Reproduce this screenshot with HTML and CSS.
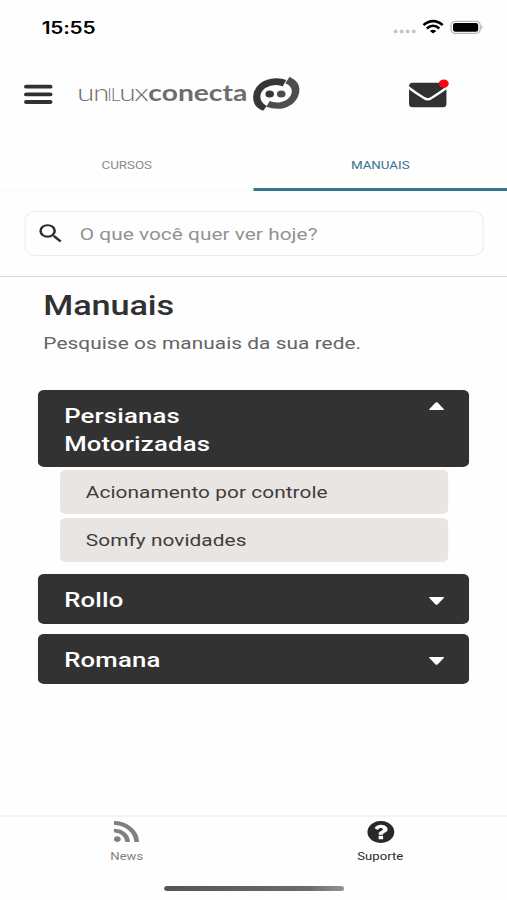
FILE: index.html
```html
<!DOCTYPE html>
<html lang="pt-BR">
<head>
<meta charset="utf-8">
<title>Unilux Conecta</title>
<link rel="stylesheet" href="styles.css">
</head>
<body>
<div class="app">
  <div class="status">
    <span class="time">15:55</span>
    <svg class="status-icons" width="74" height="16" viewBox="0 0 90 16" preserveAspectRatio="none">
      <g fill="#c4c4c4"><circle cx="2.500" cy="12.400" r="1.900"/><circle cx="8.500" cy="12.400" r="1.900"/><circle cx="14.500" cy="12.400" r="1.900"/><circle cx="20.500" cy="12.400" r="1.900"/></g>
      <g fill="none" stroke="#000" stroke-width="2.600"><path d="M30.200 6.200C35.700.7 43.700.7 49.200 6.200"/><path d="M33.500 9.500C37.300 6 42.100 6 45.900 9.500"/></g>
      <path d="M36.500 12Q39.700 9.500 42.900 12L39.700 14.500Z"/>
      <rect x="57.500" y="2.300" width="29" height="12" rx="4" fill="#fff" stroke="#b5b5b5" stroke-width="1.300"/>
      <rect x="59.500" y="3.900" width="25" height="8.800" rx="2.200"/>
      <path d="M87.800 6.300q2 2 0 4z" fill="#999"/>
    </svg>
  </div>
  <header class="header">
    <svg class="menu" width="23" height="20" viewBox="0 0 23 20"><path d="M1.500 2.700h19.500M1.500 10.400h19.500M1.500 18h19.500" stroke="#303132" stroke-width="3.800" stroke-linecap="round"/></svg>
    <svg class="logo" width="182" height="38" viewBox="0 0 223 38" preserveAspectRatio="none">
      <text class="logo-thin" x="-1.500" y="26" textLength="17.500" lengthAdjust="spacingAndGlyphs">u</text>
      <text class="logo-thin" x="15" y="26" textLength="16" lengthAdjust="spacingAndGlyphs">n</text>
      <text class="logo-caps" x="28.800" y="26">I</text>
      <text class="logo-caps" x="32.500" y="26" textLength="9.500" lengthAdjust="spacingAndGlyphs">L</text>
      <text class="logo-thin" x="41" y="26" textLength="16.500" lengthAdjust="spacingAndGlyphs">u</text>
      <text class="logo-thin" x="56" y="26" textLength="14.500" lengthAdjust="spacingAndGlyphs">x</text>
      <text class="logo-bold" x="70" y="26.200" textLength="99" lengthAdjust="spacingAndGlyphs">conecta</text>
      <path d="M208 5Q204 3.200 197.500 3.300Q188 4 182 8.300Q175 14 174.800 21.700Q175 28 178 31.500Q181 34.500 184.800 35.700L188.500 31Q182.600 28 182 22Q182 16.500 187 13Q192 10 198 10Q202 10.200 204.300 11.500Z" fill="#363636"/>
      <path d="M211.400 1.700Q217 4.500 219.400 8.300Q222 13 220.700 18.500Q219 25 214 29Q208.500 33 202 33.700Q194 34.200 188 31.700L191.400 26Q196 28 202 27.200Q209 26 212.500 20.500Q214.500 16 212.500 12.500Q211 9.500 207 8.300Z" fill="#4d4d4d"/>
      <ellipse cx="191.400" cy="19" rx="4.300" ry="3.600" fill="#363636"/><ellipse cx="203" cy="19" rx="4.300" ry="3.600" fill="#4d4d4d"/>
    </svg>
    <svg class="mail" width="33.500" height="30" viewBox="0 0 41 30" preserveAspectRatio="none">
      <rect x="0" y="3.800" width="37.400" height="24.400" rx="3.500" fill="#303132"/>
      <path d="M-.5 8.500Q8 15 15 19Q18.700 21.800 22.400 19Q29 15 38 8.500" fill="none" stroke="#fff" stroke-width="2.300"/>
      <ellipse cx="34.700" cy="4.600" rx="5" ry="4.200" fill="#f5080f"/>
    </svg>
  </header>
  <nav class="tabs">
    <span class="tab">CURSOS</span>
    <span class="tab active">MANUAIS</span>
  </nav>
  <div class="search-area">
    <div class="search">
      <svg width="25" height="25" viewBox="0 0 24 24"><path fill="#2d2e2f" d="M15.500 14h-.790l-.280-.270A6.471 6.471 0 0 0 16 9.500 6.500 6.500 0 1 0 9.500 16c1.610 0 3.090-.590 4.230-1.570l.270.280v.790l5 4.990L20.490 19l-4.990-5zm-6 0C7.010 14 5 11.990 5 9.500S7.010 5 9.500 5 14 7.010 14 9.500 11.990 14 9.500 14z"/></svg>
      <span>O que você quer ver hoje?</span>
    </div>
  </div>
  <main class="content">
    <h1>Manuais</h1>
    <p class="lead">Pesquise os manuais da sua rede.</p>
    <section class="group open">
      <div class="group-head"><span>Persianas<br>Motorizadas</span><svg width="13" height="8" viewBox="0 0 16 8" preserveAspectRatio="none"><path d="M1 8Q0 8 .8 7L7 .6Q8 -.3 9 .6L15.200 7Q16 8 15 8Z" fill="#fff"/></svg></div>
      <div class="item">Acionamento por controle</div>
      <div class="item">Somfy novidades</div>
    </section>
    <section class="group"><div class="group-head"><span>Rollo</span><svg width="13" height="8" viewBox="0 0 16 8" preserveAspectRatio="none"><path d="M1 0Q0 0 .8 1L7 7.400Q8 8.300 9 7.400L15.200 1Q16 0 15 0Z" fill="#fff"/></svg></div></section>
    <section class="group"><div class="group-head"><span>Romana</span><svg width="13" height="8" viewBox="0 0 16 8" preserveAspectRatio="none"><path d="M1 0Q0 0 .8 1L7 7.400Q8 8.300 9 7.400L15.200 1Q16 0 15 0Z" fill="#fff"/></svg></div></section>
  </main>
  <footer class="bottom">
    <div class="nav">
      <div class="nav-item">
        <svg width="20.500" height="21" viewBox="192 128 1408 1408" preserveAspectRatio="none"><path fill="#808080" d="M576 1344q0 80-56 136t-136 56-136-56-56-136 56-136 136-56 136 56 56 136zm512 123q2 28-17 48-18 21-47 21h-135q-25 0-43-16.500t-20-41.500q-22-229-184.500-391.500t-391.500-184.500q-25-2-41.500-20t-16.500-43v-135q0-29 21-47 17-17 43-17h5q160 13 306 80.500t259 181.500q114 113 181.500 259t80.500 306zm512 2q2 27-18 47-18 20-46 20h-143q-26 0-44.500-17.500t-19.500-42.500q-12-215-101-408.500t-231.500-336-336-231.500-408.500-102q-25-1-42.500-19.500t-17.500-43.500v-143q0-28 20-46 18-18 44-18h3q262 13 501.500 120t425.500 294q187 186 294 425.500t120 501.500z"/></svg>
        <span>News</span>
      </div>
      <div class="nav-item current">
        <svg width="22" height="22" viewBox="128 128 1536 1536"><path fill="#29292a" d="M1024 1376v-192q0-14-9-23t-23-9h-192q-14 0-23 9t-9 23v192q0 14 9 23t23 9h192q14 0 23-9t9-23zm256-672q0-88-55.500-163t-138.500-116-170-41q-243 0-371 213-15 24 8 42l132 100q7 6 19 6 16 0 25-12 53-68 86-92 34-24 86-24 48 0 85.500 26t37.500 59q0 38-20 61t-68 45q-63 28-115.500 86.500t-52.500 125.500v36q0 14 9 23t23 9h192q14 0 23-9t9-23q0-19 21.500-49.500t54.500-49.500q32-18 49-28.500t46-35 44.500-48 28-60.500 12.500-81zm384 192q0 209-103 385.500t-279.500 279.500-385.500 103-385.500-103-279.500-279.500-103-385.500 103-385.500 279.500-279.500 385.500-103 385.500 103 279.500 279.500 103 385.500z"/></svg>
        <span>Suporte</span>
      </div>
    </div>
    <div class="home-bar"></div>
  </footer>
</div>
</body>
</html>
```

FILE: styles.css
```css
* { box-sizing: border-box; }
html, body { margin: 0; width: 507px; height: 900px; overflow: hidden; background: #fefefe; }
svg { display: block; overflow: visible; flex: none; }
.app {
  width: 414px;
  height: 900px;
  display: flex;
  flex-direction: column;
  font-family: Roboto, "Liberation Sans", sans-serif;
  color: #303132;
  transform: scaleX(1.22464);
  transform-origin: 0 0;
}
.status { height: 56px; padding: 19px 19px 0 34px; display: flex; justify-content: space-between; }
.time { margin-top: 1px; font: 600 17px/17px Inter, sans-serif; letter-spacing: -.15px; color: #000; }
.header { height: 82px; padding-left: 19.600px; display: flex; align-items: flex-start; }
.menu { margin-top: 28px; }
.logo { margin: 19px 0 0 21px; }
.logo-thin { font: 300 24px Lato, sans-serif; fill: #707070; }
.logo-caps { font: 300 17px Lato, sans-serif; fill: #707070; }
.logo-bold { font: 700 23.500px Lato, sans-serif; fill: #6d6d6d; }
.mail { margin: 23px 0 0 88.200px; }
.tabs { height: 53px; display: flex; border-bottom: 1px solid #f8f8f8; }
.tab { flex: 1; height: 53px; text-align: center; font-size: 10.900px; line-height: 55px; color: #8b8b8b; }
.tab.active { color: #347590; border-bottom: 3px solid #347590; }
.search-area { height: 86px; padding: 20px 19px 0 19.600px; border-bottom: 1.500px solid #d8d8d8; }
.search { height: 45px; border: 1.500px solid #ededed; border-radius: 9px; display: flex; align-items: center; padding-left: 8px; font-size: 17px; color: #929292; }
.search span { margin-left: 11.500px; letter-spacing: .03px; }
.content { flex: 1; padding: 0 30.600px 0 31.400px; }
h1 { margin: 12px 0 0 4px; font-weight: 500; font-size: 28px; line-height: 34px; letter-spacing: -.1px; }
.lead { margin: 8px 0 34.500px 4px; font-size: 17px; line-height: 24px; letter-spacing: .05px; color: #646464; }
.group { margin-bottom: 10.500px; }
.group.open { margin-bottom: 12.500px; }
.group-head { min-height: 49.700px; padding: 12px 20.800px 8.500px 21px; display: flex; justify-content: space-between; align-items: flex-start; background: #323232; border-radius: 5px; color: #fff; font-weight: 500; font-size: 21px; line-height: 28.500px; letter-spacing: .15px; }
.group-head svg { margin-top: 10.500px; }
.open .group-head svg { margin-top: .5px; }
.item { height: 44px; margin: 4px 17.500px 0 18px; padding-left: 20.700px; background: #e8e5e2; border-radius: 5px; font-size: 17px; line-height: 45px; color: #3f3d3c; letter-spacing: .05px; }
.group-head + .item { margin-top: 2.500px; }
.bottom { height: 85px; border-top: 2px solid #f5f5f5; }
.nav { display: flex; height: 69px; padding-top: 4px; }
.nav-item { flex: 1; display: flex; flex-direction: column; align-items: center; justify-content: flex-start; font-size: 10.700px; line-height: 14px; color: #808080; }
.nav-item svg { margin-bottom: 7px; }
.nav-item:first-child svg { margin-bottom: 8px; }
.nav-item.current { color: #29292a; }
.home-bar { width: 147px; height: 5px; margin: 0 auto; border-radius: 3px; background: linear-gradient(90deg, #555, #6b6b6b 80%, #949494); }
```
